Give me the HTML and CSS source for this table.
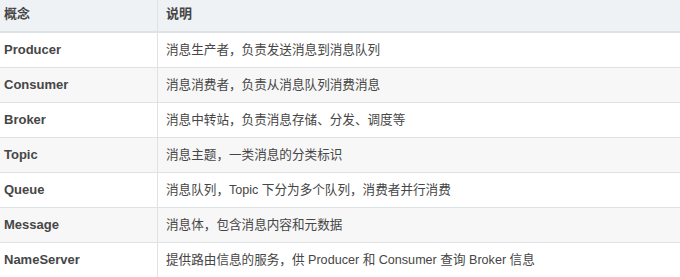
FILE: index.html
```html
<!DOCTYPE html>
<html lang="zh-CN">
<head>
    <meta charset="UTF-8">
    <title>RocketMQ 核心概念</title>
    <link rel="stylesheet" href="styles.css">
</head>
<body>
    <table class="concepts">
        <thead>
            <tr>
                <th class="name">概念</th>
                <th>说明</th>
            </tr>
        </thead>
        <tbody>
            <tr>
                <td class="name">Producer</td>
                <td>消息生产者，负责发送消息到消息队列</td>
            </tr>
            <tr>
                <td class="name">Consumer</td>
                <td>消息消费者，负责从消息队列消费消息</td>
            </tr>
            <tr>
                <td class="name">Broker</td>
                <td>消息中转站，负责消息存储、分发、调度等</td>
            </tr>
            <tr>
                <td class="name">Topic</td>
                <td>消息主题，一类消息的分类标识</td>
            </tr>
            <tr>
                <td class="name">Queue</td>
                <td>消息队列，Topic 下分为多个队列，消费者并行消费</td>
            </tr>
            <tr>
                <td class="name">Message</td>
                <td>消息体，包含消息内容和元数据</td>
            </tr>
            <tr>
                <td class="name">NameServer</td>
                <td>提供路由信息的服务，供 Producer 和 Consumer 查询 Broker 信息</td>
            </tr>
        </tbody>
    </table>
</body>
</html>
```

FILE: styles.css
```css
body {
    margin: 0;
    overflow: hidden;
    font-family: "Liberation Sans", Arial, "Noto Sans CJK SC", sans-serif;
    font-size: 13px;
    color: #464646;
    background: #fff;
}
.concepts {
    border-collapse: collapse;
    width: 720px;
    margin: -4px 0 0 -5px;
}
.concepts th,
.concepts td {
    padding: 8px;
    line-height: 18px;
    text-align: left;
    border: 1px solid #dfe2e5;
}
.concepts td {
    font-size: 12.6px;
}
.concepts th {
    background-color: #eff2f5;
    font-weight: bold;
    border-bottom-width: 2px;
}
.concepts .name {
    width: 145px;
    font-size: 13px;
    font-weight: bold;
}
.concepts tbody tr:nth-child(even) {
    background-color: #f7f7f7;
}
```
